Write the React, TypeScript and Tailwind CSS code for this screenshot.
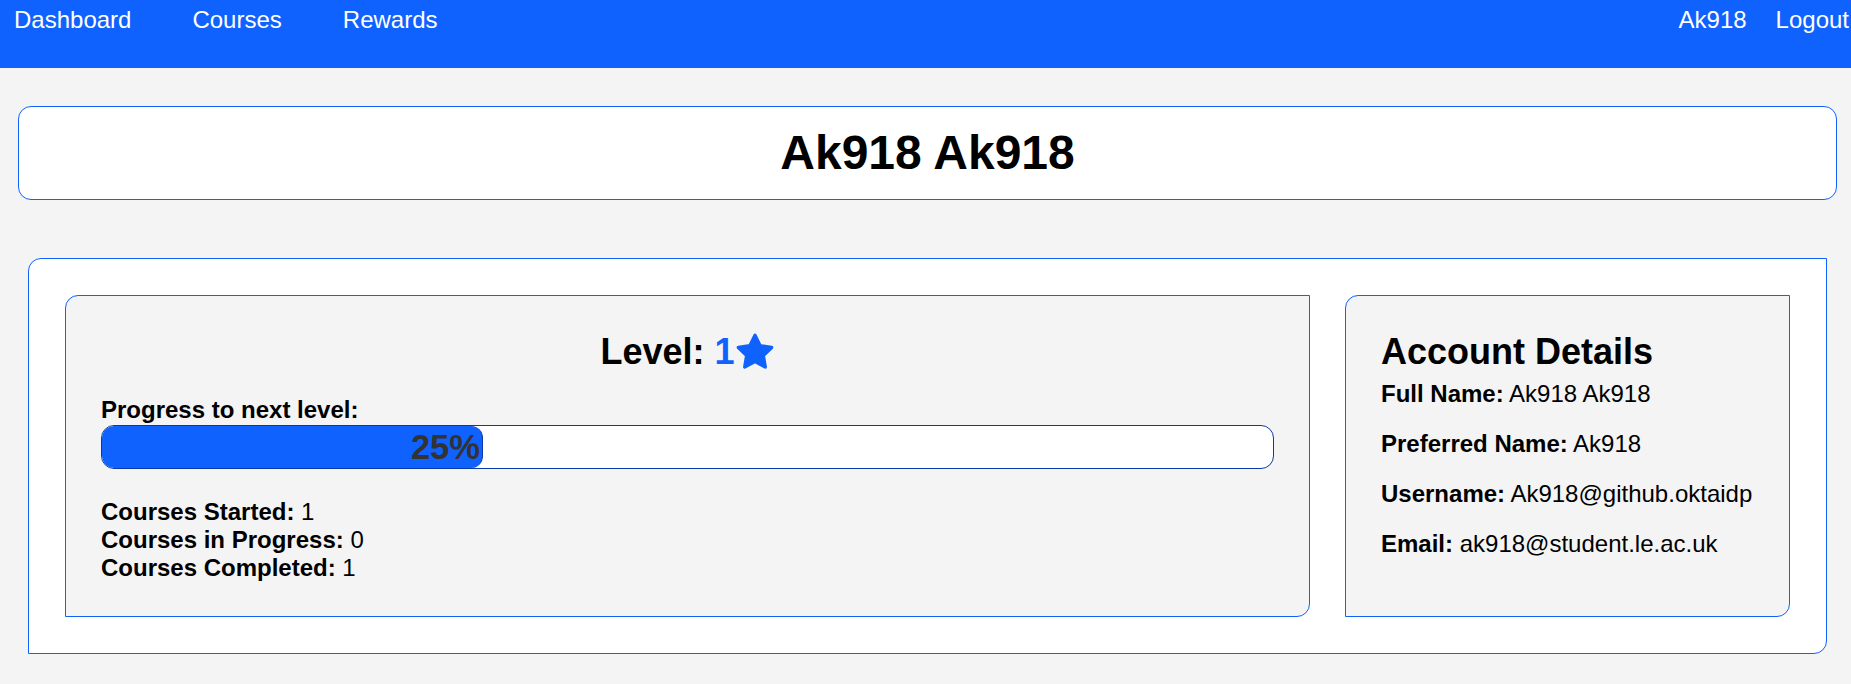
import React from "react";

function Star() {
  return (
    <svg width="40" height="40" viewBox="0 0 24 24" className="shrink-0">
      <path
        d="M12 2l3.09 6.26L22 9.27l-5 4.87 1.18 6.88L12 17.77l-6.18 3.25L7 14.14 2 9.27l6.91-1.01L12 2z"
        fill="#0f62fe"
        stroke="#0f62fe"
        strokeWidth="2"
        strokeLinejoin="round"
      />
    </svg>
  );
}

export default function App() {
  return (
    <div className="min-h-[684px] bg-[#f4f4f4] font-['Liberation_Sans',Arial,sans-serif] text-[24px] leading-[28px] text-black">
      <nav className="h-[68px] bg-[#0f62fe] text-white flex justify-between items-start pt-[6px]">
        <div className="flex gap-[61px] pl-[14px]">
          <span>Dashboard</span>
          <span>Courses</span>
          <span>Rewards</span>
        </div>
        <div className="flex gap-[29px] pr-[2px]">
          <span>Ak918</span>
          <span>Logout</span>
        </div>
      </nav>

      <div className="mt-[38px] ml-[18px] mr-[14px] h-[94px] rounded-[13px] border border-[#0f62fe] bg-white flex items-center justify-center">
        <h1 className="text-[48px] font-bold leading-none">Ak918 Ak918</h1>
      </div>

      <div className="mt-[58px] ml-[28px] mr-[24px] border border-[#0f62fe] rounded-tl-[13px] rounded-br-[13px] bg-white p-[36px] flex gap-[35px]">
        <div className="flex-1 border border-[#0f62fe] rounded-tl-[13px] rounded-br-[13px] bg-[#f4f4f4] px-[35px] pt-[35px] pb-[34px]">
          <h2 className="flex items-center justify-center text-[36px] font-bold leading-[41px]">
            <span>
              Level: <span className="text-[#0f62fe]">1</span>
            </span>
            <Star />
          </h2>
          <div className="mt-[24px] font-bold">Progress to next level:</div>
          <div className="mt-[1px] h-[44px] w-full border border-[#0a3aa8] rounded-[13px] bg-white overflow-hidden flex">
            <div className="h-full w-[381px] bg-[#0f62fe] rounded-[12px] border-r border-[#0a3aa8] flex items-center justify-end pr-[2px]">
              <span className="text-[34.5px] font-bold leading-none text-[#333333]">25%</span>
            </div>
          </div>
          <div className="mt-[29px]">
            <div>
              <b>Courses Started:</b> 1
            </div>
            <div>
              <b>Courses in Progress:</b> 0
            </div>
            <div>
              <b>Courses Completed:</b> 1
            </div>
          </div>
        </div>

        <div className="w-[445px] shrink-0 border border-[#0f62fe] rounded-tl-[13px] rounded-br-[13px] bg-[#f4f4f4] px-[35px] pt-[35px] pb-[34px]">
          <h2 className="text-[36px] font-bold leading-[41px]">Account Details</h2>
          <div className="mt-[8px] flex flex-col gap-[22px]">
            <div>
              <b>Full Name:</b> Ak918 Ak918
            </div>
            <div>
              <b>Preferred Name:</b> Ak918
            </div>
            <div>
              <b>Username:</b> Ak918@github.oktaidp
            </div>
            <div>
              <b>Email:</b> ak918@student.le.ac.uk
            </div>
          </div>
        </div>
      </div>
    </div>
  );
}
